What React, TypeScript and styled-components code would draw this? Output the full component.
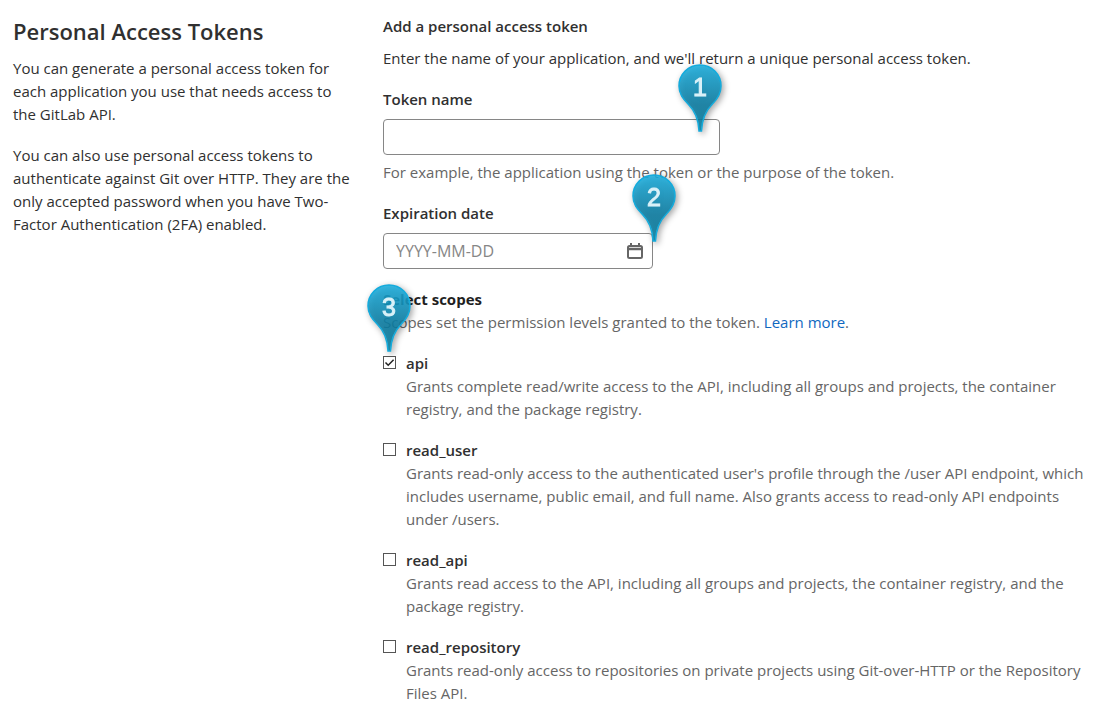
import React, { useState } from "react";
import styled, { createGlobalStyle } from "styled-components";

const GlobalStyle = createGlobalStyle`
  *, *::before, *::after { box-sizing: border-box; }
  body {
    margin: 0;
    background: #fff;
    color: #303030;
    font-family: "Segoe UI", "Open Sans", "Noto Sans", sans-serif;
    font-size: 15px;
    line-height: 23px;
  }
  h1, h2, h3, p { margin: 0; }
`;

const Page = styled.main`
  display: grid;
  grid-template-columns: minmax(0, 340px) minmax(0, 1fr);
  column-gap: 30px;
  padding: 15px 12px 0 13px;
`;

const Intro = styled.section`
  display: flex;
  flex-direction: column;
`;

const Title = styled.h1`
  margin-bottom: 9px;
  font-size: 22px;
  font-weight: 600;
  line-height: 33px;
`;

const Paragraph = styled.p`
  margin-bottom: 18px;
`;

const Form = styled.form`
  display: flex;
  flex-direction: column;
`;

const FormTitle = styled.h2`
  margin-bottom: 9px;
  font-size: 15px;
  font-weight: 600;
  line-height: 23px;
`;

const Field = styled.div`
  display: flex;
  flex-direction: column;
  align-items: flex-start;
  margin-bottom: 18px;
`;

const FieldLabel = styled.label`
  margin-bottom: 8px;
  font-weight: 600;
`;

const Control = styled.div<{ $width: number }>`
  position: relative;
  width: 100%;
  max-width: ${(p) => p.$width}px;
`;

const TextInput = styled.input`
  display: block;
  width: 100%;
  height: 36px;
  padding: 0 12px;
  border: 1px solid #868686;
  border-radius: 4px;
  background: #fff;
  color: #303030;
  font: inherit;
  font-size: 16px;
  &::placeholder { color: #868686; opacity: 1; }
`;

const CalendarButton = styled.button`
  position: absolute;
  top: 10px;
  right: 10px;
  width: 16px;
  height: 16px;
  padding: 0;
  border: 0;
  background: none;
  color: #666;
  svg { display: block; }
`;

const Help = styled.p`
  color: #666;
`;

const FieldHelp = styled(Help)`
  margin-top: 6px;
`;

const Scopes = styled.fieldset`
  position: relative;
  min-width: 0;
  margin: 1px 0 0;
  padding: 0;
  border: 0;
`;

const ScopesTitle = styled.legend`
  padding: 0;
  color: #1f1f1f;
  font-weight: 700;
`;

const Link = styled.a`
  color: #1068bf;
  text-decoration: none;
`;

const ScopeList = styled.div`
  display: flex;
  flex-direction: column;
  gap: 18px;
  margin-top: 18px;
`;

const Scope = styled.div`
  display: grid;
  grid-template-columns: 13px minmax(0, 1fr);
  column-gap: 10px;
`;

const Checkbox = styled.input`
  appearance: none;
  width: 13px;
  height: 13px;
  margin: 4px 0 0;
  border: 1px solid #555;
  background: #fff;
  &:checked {
    background: #fff url("data:image/svg+xml,%3Csvg xmlns='http://www.w3.org/2000/svg' viewBox='0 0 11 11'%3E%3Cpath d='M1.500 5.500 4.200 8.200 9.600 2.800' fill='none' stroke='%23222' stroke-width='1.500'/%3E%3C/svg%3E") center / 11px 11px no-repeat;
  }
`;

const ScopeName = styled.label`
  display: block;
  font-weight: 600;
`;

const Pin = styled.svg<{ $left: number; $top: number }>`
  position: absolute;
  left: ${(p) => p.$left}px;
  top: ${(p) => p.$top}px;
  z-index: 1;
  overflow: visible;
  pointer-events: none;
  filter: drop-shadow(2px 2px 3px rgba(0, 0, 0, 0.4));
`;

const PinText = styled.text`
  fill: #d9f1f8;
  stroke: #d9f1f8;
  stroke-width: 1px;
  font-family: "Liberation Sans", sans-serif;
  font-size: 25px;
  text-anchor: middle;
`;

function Marker({ n, left, top }: { n: number; left: number; top: number }) {
  const id = `pin-${n}`;
  return (
    <Pin $left={left} $top={top} width="44" height="68" viewBox="0 0 44 68" aria-hidden="true">
      <defs>
        <linearGradient id={id} x1="0" y1="0" x2="0" y2="1">
          <stop offset="0" stopColor="#1bb0e0" />
          <stop offset="0.6" stopColor="#0c7ea4" />
          <stop offset="1" stopColor="#047c9c" />
        </linearGradient>
      </defs>
      <path
        d="M22 1C10.400 1 1 10.400 1 22C1 30 5 35 10.500 40.500C17 47 20.500 54 21 67H23.500C24 54 27.500 47 34 40.500C39.500 35 43 30 43 22C43 10.400 33.600 1 22 1Z"
        fill={`url(#${id})`}
        fillOpacity="0.87"
        stroke="#14abdc"
        strokeWidth="1.500"
      />
      <PinText x="22" y="32">{n}</PinText>
    </Pin>
  );
}

function CalendarIcon() {
  return (
    <svg width="16" height="16" viewBox="0 0 16 16" fill="none" stroke="currentColor" aria-hidden="true">
      <rect x="1" y="3" width="14" height="12" rx="1.500" strokeWidth="2" />
      <path d="M1 6h14" strokeWidth="2.500" />
      <path d="M4 0v4M12 0v4" strokeWidth="2" />
    </svg>
  );
}

const scopes = [
  {
    name: "api",
    text: "Grants complete read/write access to the API, including all groups and projects, the container registry, and the package registry.",
  },
  {
    name: "read_user",
    text: "Grants read-only access to the authenticated user's profile through the /user API endpoint, which includes username, public email, and full name. Also grants access to read-only API endpoints under /users.",
  },
  {
    name: "read_api",
    text: "Grants read access to the API, including all groups and projects, the container registry, and the package registry.",
  },
  {
    name: "read_repository",
    text: "Grants read-only access to repositories on private projects using Git-over-HTTP or the Repository Files API.",
  },
];

export default function App() {
  const [selected, setSelected] = useState<string[]>(["api"]);
  const toggle = (name: string) =>
    setSelected((s) => (s.includes(name) ? s.filter((x) => x !== name) : [...s, name]));

  return (
    <>
      <GlobalStyle />
      <Page>
        <Intro>
          <Title>Personal Access Tokens</Title>
          <Paragraph>
            You can generate a personal access token for each application you use that needs access
            to the GitLab API.
          </Paragraph>
          <Paragraph>
            You can also use personal access tokens to authenticate against Git over HTTP. They are
            the only accepted password when you have Two-Factor Authentication (2FA) enabled.
          </Paragraph>
        </Intro>
        <Form>
          <FormTitle>Add a personal access token</FormTitle>
          <Paragraph>
            Enter the name of your application, and we'll return a unique personal access token.
          </Paragraph>
          <Field>
            <FieldLabel htmlFor="token-name">Token name</FieldLabel>
            <Control $width={337}>
              <TextInput id="token-name" type="text" aria-describedby="token-help" />
              <Marker n={1} left={295} top={-55} />
            </Control>
            <FieldHelp id="token-help">
              For example, the application using the token or the purpose of the token.
            </FieldHelp>
          </Field>
          <Field>
            <FieldLabel htmlFor="expires">Expiration date</FieldLabel>
            <Control $width={270}>
              <TextInput id="expires" type="text" placeholder="YYYY-MM-DD" />
              <CalendarButton type="button" aria-label="Open calendar">
                <CalendarIcon />
              </CalendarButton>
              <Marker n={2} left={249} top={-59} />
            </Control>
          </Field>
          <Scopes>
            <ScopesTitle>Select scopes</ScopesTitle>
            <Help>
              Scopes set the permission levels granted to the token. <Link href="#scopes">Learn more</Link>.
            </Help>
            <Marker n={3} left={-16} top={-27} />
            <ScopeList>
              {scopes.map((s) => (
                <Scope key={s.name}>
                  <Checkbox
                    id={s.name}
                    type="checkbox"
                    checked={selected.includes(s.name)}
                    onChange={() => toggle(s.name)}
                  />
                  <div>
                    <ScopeName htmlFor={s.name}>{s.name}</ScopeName>
                    <Help>{s.text}</Help>
                  </div>
                </Scope>
              ))}
            </ScopeList>
          </Scopes>
        </Form>
      </Page>
    </>
  );
}
